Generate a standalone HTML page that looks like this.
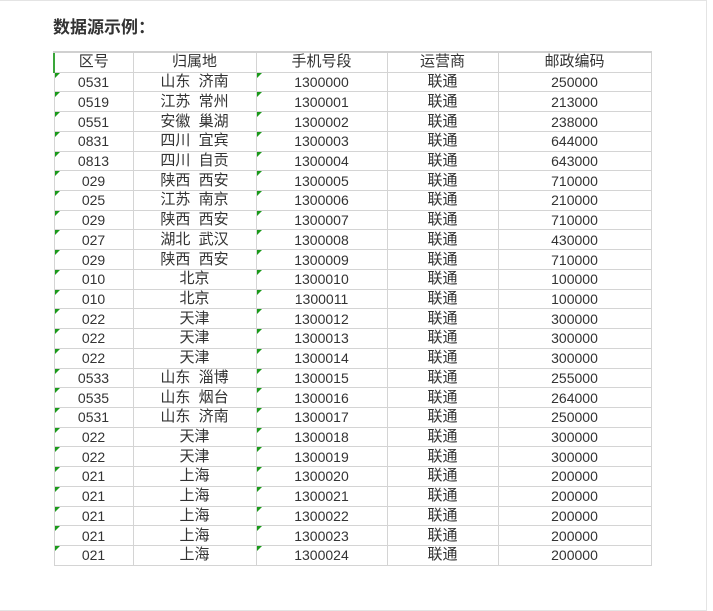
<!DOCTYPE html>
<html><head><meta charset="utf-8"><style>
body{margin:0;background:#fff;width:713px;height:611px;overflow:hidden;position:relative;font-family:"Liberation Sans","Noto Sans CJK SC",sans-serif;}
.frame{position:absolute;left:-2px;top:0;width:708px;height:609px;border:1px solid #e4e4e4;border-left:none;}
h1{position:absolute;left:53px;top:13px;margin:0;font-size:17px;font-weight:bold;color:#333;font-family:"Liberation Sans","Noto Sans CJK SC",sans-serif;}
table{position:absolute;left:53px;top:51px;border-collapse:collapse;table-layout:fixed;width:597px;}
td{border:1px solid #d4d4d4;height:18.73px;padding:0;text-align:center;font-size:14px;color:#333;line-height:18px;position:relative;white-space:pre;}
td.c{font-size:15px;}
tr:first-child td{border-top:2px solid #d0d0d0;font-size:15px;}
tr:first-child td:first-child{border-left:2px solid #3aa63a;}
td.g::before{content:"";position:absolute;left:0;top:0;border-top:5px solid #1a9a1a;border-right:5px solid transparent;}
</style></head><body>
<div class="frame"></div>
<h1>数据源示例：</h1>
<table>
<colgroup><col style="width:79px"><col style="width:123px"><col style="width:131px"><col style="width:111px"><col style="width:153px"></colgroup>
<tr><td>区号</td><td>归属地</td><td>手机号段</td><td>运营商</td><td>邮政编码</td></tr>
<tr><td class="g">0531</td><td class="c">山东  济南</td><td class="g">1300000</td><td class="c">联通</td><td>250000</td></tr>
<tr><td class="g">0519</td><td class="c">江苏  常州</td><td class="g">1300001</td><td class="c">联通</td><td>213000</td></tr>
<tr><td class="g">0551</td><td class="c">安徽  巢湖</td><td class="g">1300002</td><td class="c">联通</td><td>238000</td></tr>
<tr><td class="g">0831</td><td class="c">四川  宜宾</td><td class="g">1300003</td><td class="c">联通</td><td>644000</td></tr>
<tr><td class="g">0813</td><td class="c">四川  自贡</td><td class="g">1300004</td><td class="c">联通</td><td>643000</td></tr>
<tr><td class="g">029</td><td class="c">陕西  西安</td><td class="g">1300005</td><td class="c">联通</td><td>710000</td></tr>
<tr><td class="g">025</td><td class="c">江苏  南京</td><td class="g">1300006</td><td class="c">联通</td><td>210000</td></tr>
<tr><td class="g">029</td><td class="c">陕西  西安</td><td class="g">1300007</td><td class="c">联通</td><td>710000</td></tr>
<tr><td class="g">027</td><td class="c">湖北  武汉</td><td class="g">1300008</td><td class="c">联通</td><td>430000</td></tr>
<tr><td class="g">029</td><td class="c">陕西  西安</td><td class="g">1300009</td><td class="c">联通</td><td>710000</td></tr>
<tr><td class="g">010</td><td class="c">北京</td><td class="g">1300010</td><td class="c">联通</td><td>100000</td></tr>
<tr><td class="g">010</td><td class="c">北京</td><td class="g">1300011</td><td class="c">联通</td><td>100000</td></tr>
<tr><td class="g">022</td><td class="c">天津</td><td class="g">1300012</td><td class="c">联通</td><td>300000</td></tr>
<tr><td class="g">022</td><td class="c">天津</td><td class="g">1300013</td><td class="c">联通</td><td>300000</td></tr>
<tr><td class="g">022</td><td class="c">天津</td><td class="g">1300014</td><td class="c">联通</td><td>300000</td></tr>
<tr><td class="g">0533</td><td class="c">山东  淄博</td><td class="g">1300015</td><td class="c">联通</td><td>255000</td></tr>
<tr><td class="g">0535</td><td class="c">山东  烟台</td><td class="g">1300016</td><td class="c">联通</td><td>264000</td></tr>
<tr><td class="g">0531</td><td class="c">山东  济南</td><td class="g">1300017</td><td class="c">联通</td><td>250000</td></tr>
<tr><td class="g">022</td><td class="c">天津</td><td class="g">1300018</td><td class="c">联通</td><td>300000</td></tr>
<tr><td class="g">022</td><td class="c">天津</td><td class="g">1300019</td><td class="c">联通</td><td>300000</td></tr>
<tr><td class="g">021</td><td class="c">上海</td><td class="g">1300020</td><td class="c">联通</td><td>200000</td></tr>
<tr><td class="g">021</td><td class="c">上海</td><td class="g">1300021</td><td class="c">联通</td><td>200000</td></tr>
<tr><td class="g">021</td><td class="c">上海</td><td class="g">1300022</td><td class="c">联通</td><td>200000</td></tr>
<tr><td class="g">021</td><td class="c">上海</td><td class="g">1300023</td><td class="c">联通</td><td>200000</td></tr>
<tr><td class="g">021</td><td class="c">上海</td><td class="g">1300024</td><td class="c">联通</td><td>200000</td></tr>
</table>
</body></html>
